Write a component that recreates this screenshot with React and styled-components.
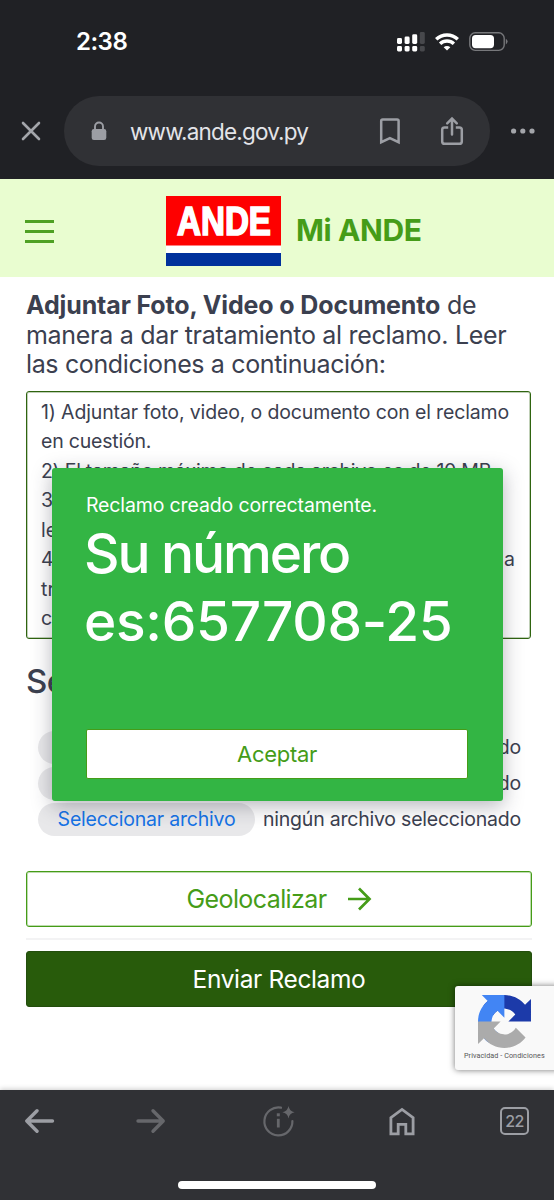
import React from 'react';
import styled, { createGlobalStyle } from 'styled-components';

const GlobalStyle = createGlobalStyle`
  * {
    box-sizing: border-box;
  }

  body {
    margin: 0;
    background: #ffffff;
    font-family: Inter, 'Liberation Sans', sans-serif;
  }

  svg {
    display: block;
    flex: none;
  }
`;

const Phone = styled.div`
  position: relative;
  width: 554px;
  height: 1200px;
  overflow: hidden;
  display: flex;
  flex-direction: column;
  background: #ffffff;
`;

const Text = styled.span`
  font-size: ${({ $size }) => $size}px;
  font-weight: ${({ $weight }) => $weight || 400};
  letter-spacing: ${({ $spacing }) => $spacing || 0}px;
  color: ${({ $color }) => $color || 'inherit'};
  white-space: nowrap;
`;

const Browser = styled.header`
  height: 179px;
  flex: none;
  background: #202125;
`;

const StatusBar = styled.div`
  height: 96px;
  padding: 27px 46px 0 76px;
  display: flex;
  align-items: flex-start;
  justify-content: space-between;
  line-height: 29px;
`;

const StatusIcons = styled.div`
  display: flex;
  align-items: center;
  gap: 10px;
  padding-top: 5px;
`;

const AddressRow = styled.div`
  display: flex;
  align-items: center;
  padding: 0 18px 0 20px;
  height: 70px;
`;

const AddressBar = styled.div`
  width: 427px;
  height: 70px;
  margin: 0 20px 0 22px;
  padding: 0 26px 0 27px;
  border-radius: 35px;
  background: #303135;
  display: flex;
  align-items: center;
`;

const Url = styled(Text)`
  flex: 1;
  margin-left: 23px;
`;

const BarIcons = styled.div`
  display: flex;
  align-items: center;
  gap: 39px;
`;

const SiteHeader = styled.div`
  height: 98px;
  flex: none;
  padding: 17px 25px 0;
  display: flex;
  align-items: flex-start;
  background: #e9fdd0;
`;

const MenuButton = styled.div`
  width: 29px;
  margin: 24px 112px 0 0;
  display: flex;
  flex-direction: column;
  gap: 7px;

  i {
    height: 3px;
    background: #4fa124;
  }
`;

const SiteName = styled(Text)`
  margin: 15px 0 0 15px;
  line-height: 38px;
`;

const Content = styled.main`
  flex: 1;
  padding: 14px 23px 0 26px;
  color: #3b404f;
`;

const Intro = styled.p`
  margin: 0;
  display: flex;
  flex-direction: column;
  line-height: 29.5px;
`;

const Conditions = styled.div`
  width: 505px;
  height: 248px;
  margin-top: 11.5px;
  padding: 5.5px 14px 0;
  display: flex;
  flex-direction: column;
  border: 1px solid #2f6410;
  box-shadow: inset 0 0 0 1px rgba(47, 100, 16, 0.3);
  border-radius: 3px;
  line-height: 29.5px;
`;

const Justified = styled(Text)`
  width: 474px;
  text-align-last: justify;
`;

const SectionTitle = styled.h2`
  margin: 22px 0 26px;
  line-height: 41px;
  font-weight: 500;
`;

const Files = styled.div`
  padding-left: 12px;
  display: flex;
  flex-direction: column;
  gap: 3px;
`;

const FileRow = styled.div`
  display: flex;
  align-items: center;
  gap: 8px;
  line-height: 30px;
`;

const FileButton = styled.div`
  width: 217px;
  height: 33px;
  padding-bottom: 2px;
  border-radius: 17px;
  background: #e8e8ea;
  display: flex;
  align-items: center;
  justify-content: center;
`;

const FileName = styled(Text)`
  padding-bottom: 2px;
`;

const ActionButton = styled.div`
  width: 506px;
  height: 56px;
  display: flex;
  align-items: center;
  justify-content: center;
  gap: 20px;
  border-radius: 3px;
  border: 1px solid ${({ $filled }) => ($filled ? '#234e0c' : '#459c18')};
  box-shadow: inset 0 0 0 1px ${({ $filled }) => ($filled ? '#28590d' : 'rgba(69, 156, 24, 0.35)')};
  background: ${({ $filled }) => ($filled ? '#285b0b' : '#ffffff')};
`;

const Divider = styled.div`
  width: 506px;
  height: 2px;
  margin: 11px 0;
  background: #f3f3f4;
`;

const Modal = styled.div`
  position: absolute;
  left: 52px;
  top: 468px;
  width: 451px;
  height: 333px;
  padding: 22px 34px 22px;
  display: flex;
  flex-direction: column;
  border-radius: 3px;
  background: #33b544;
  color: #ffffff;
  box-shadow: 0 5px 20px rgba(40, 40, 60, 0.34);
`;

const ModalMessage = styled(Text)`
  line-height: 30px;
`;

const ModalNumber = styled.div`
  flex: 1;
  margin-left: -2px;
  display: flex;
  flex-direction: column;
  line-height: 67.5px;
`;

const AcceptButton = styled.div`
  width: 382px;
  height: 50px;
  display: flex;
  align-items: center;
  justify-content: center;
  border: 1px solid #459c18;
  border-radius: 2px;
  background: #ffffff;
`;

const Captcha = styled.div`
  position: absolute;
  left: 455px;
  top: 986px;
  width: 105px;
  height: 84px;
  padding: 9px 0 0 9px;
  border-radius: 3px;
  background: #f9f9f9;
  box-shadow: 0 0 6px rgba(0, 0, 0, 0.55);
  font-family: Roboto, sans-serif;

  svg {
    margin-left: 14px;
  }
`;

const CaptchaLinks = styled(Text)`
  display: block;
  line-height: 14px;
  margin-top: 1px;
`;

const Toolbar = styled.footer`
  position: relative;
  height: 110px;
  flex: none;
  display: flex;
  flex-direction: column;
  align-items: center;
  justify-content: space-between;
  padding-bottom: 11px;
  background: #303135;
  box-shadow: 0 -1px 5px rgba(0, 0, 0, 0.2);
`;

const ToolbarIcons = styled.div`
  width: 554px;
  height: 62px;
  padding: 0 25px;
  display: grid;
  grid-template-columns: 111px 126px 127px 111px 29px;
  align-items: center;
`;

const TabCount = styled.div`
  width: 29px;
  height: 28px;
  display: flex;
  align-items: center;
  justify-content: center;
  border: 2px solid #9c9ea4;
  border-radius: 5px;
  color: #9c9ea4;
`;

const HomeIndicator = styled.div`
  width: 198px;
  height: 8px;
  border-radius: 4px;
  background: #ffffff;
`;

const Signal = () => (
  <svg width="28" height="20" viewBox="0 0 28 20" fill="#fff">
    <rect x="0" y="6" width="5" height="6" rx="1.4" />
    <rect x="7.6" y="4.5" width="5" height="7.5" rx="1.4" />
    <rect x="15.2" y="2.3" width="5" height="9.7" rx="1.4" />
    <rect x="22.8" y="0" width="5" height="12" rx="1.4" fill="#47484c" />
    <rect x="0" y="14" width="5" height="5.4" rx="1.4" />
    <rect x="7.6" y="14" width="5" height="5.4" rx="1.4" />
    <rect x="15.2" y="14" width="5" height="5.4" rx="1.4" />
    <rect x="22.8" y="14" width="5" height="5.4" rx="1.4" fill="#47484c" />
  </svg>
);

const Wifi = () => (
  <svg width="24" height="18" viewBox="0 0 24 18" fill="none" stroke="#fff" strokeWidth="3.4">
    <path d="M1.2 6.3a15.6 15.6 0 0 1 21.6 0" />
    <path d="M5.1 10.7a10 10 0 0 1 13.8 0" />
    <path d="M12 17.6l-3.3-3.3a4.7 4.7 0 0 1 6.6 0z" fill="#fff" stroke="none" />
  </svg>
);

const Battery = () => (
  <svg width="39" height="20" viewBox="0 0 39 20">
    <rect x="0.8" y="0.8" width="34.4" height="17.6" rx="5.4" fill="none" stroke="#77787b" strokeWidth="1.4" />
    <rect x="3" y="3" width="22" height="13.2" rx="3.6" fill="#fff" />
    <path d="M36.8 6.8q1.8 1 1.8 2.8t-1.8 2.8z" fill="#77787b" />
  </svg>
);

const Close = () => (
  <svg width="22" height="22" viewBox="0 0 22 22" stroke="#a3a5aa" strokeWidth="2.6" strokeLinecap="round">
    <path d="M3 3l16 16M19 3L3 19" />
  </svg>
);

const Lock = () => (
  <svg width="16" height="20" viewBox="0 0 16 20">
    <path d="M4 9V5.5a4 4 0 0 1 8 0V9" fill="none" stroke="#9c9ea4" strokeWidth="1.9" />
    <rect x="0.7" y="8" width="14.6" height="11" rx="2.2" fill="#9c9ea4" />
  </svg>
);

const Bookmark = () => (
  <svg width="22" height="28" viewBox="0 0 22 28" fill="none" stroke="#9c9ea4" strokeWidth="2.5">
    <path d="M2.2 25.2V4.1Q2.2 2.6 3.7 2.6H18.1Q19.6 2.6 19.6 4.1V25.2L10.9 21.1z" />
  </svg>
);

const Share = () => (
  <svg width="24" height="30" viewBox="0 0 24 30" fill="none" stroke="#9c9ea4" strokeWidth="2.5">
    <path d="M8.2 11.4H4.6Q2.2 11.4 2.2 13.8V25.4Q2.2 27.8 4.6 27.8H19.4Q21.8 27.8 21.8 25.4V13.8Q21.8 11.4 19.4 11.4H15.8" />
    <path d="M12 18.5V2.9M7.2 7.4l4.8-4.8 4.8 4.8" strokeLinecap="round" />
  </svg>
);

const More = () => (
  <svg width="26" height="6" viewBox="0 0 26 6" fill="#a3a5aa">
    <circle cx="3.6" cy="3" r="2.6" />
    <circle cx="12.8" cy="3" r="2.6" />
    <circle cx="22" cy="3" r="2.6" />
  </svg>
);

const Logo = () => (
  <svg width="115" height="70" viewBox="0 0 115 70">
    <rect width="115" height="70" fill="#fff" />
    <rect width="115" height="49.5" fill="#fe0000" />
    <rect y="57" width="115" height="13" fill="#00319c" />
    <text
      x="11"
      y="39"
      textLength="94"
      lengthAdjust="spacingAndGlyphs"
      fill="#fff"
      stroke="#fff"
      strokeWidth="1.7"
      fontFamily="Liberation Sans"
      fontWeight="700"
      fontSize="40.5"
    >
      ANDE
    </text>
  </svg>
);

const GoArrow = () => (
  <svg width="25" height="24" viewBox="0 0 25 24" fill="none" stroke="#459c18" strokeWidth="2.7">
    <path d="M1 12H22.5M12 1.5L22.5 12L12 22.5" />
  </svg>
);

const NavArrow = ({ color, forward }) => (
  <svg width="30" height="26" viewBox="0 0 30 26" fill="none" stroke={color} strokeWidth="3.4" strokeLinecap="round" strokeLinejoin="round">
    <path d={forward ? 'M2 13H27M17 2.8L27.2 13L17 23.2' : 'M27.5 13H2M12 2.8L1.8 13L12 23.2'} />
  </svg>
);

const InfoSpark = () => (
  <svg width="34" height="32" viewBox="0 0 34 32" fill="none" stroke="#66676b" strokeWidth="2.2">
    <path d="M19 2.7A14 14 0 1 0 30.4 16" strokeLinecap="round" />
    <path d="M16.3 13.8V22.5" strokeWidth="2.8" />
    <rect x="14.8" y="8.3" width="3" height="3" fill="#66676b" stroke="none" />
    <path d="M26.5 1Q27.4 6.2 32.6 7.2Q27.4 8.2 26.5 13.4Q25.6 8.2 20.4 7.2Q25.6 6.2 26.5 1z" fill="#66676b" stroke="none" />
  </svg>
);

const Home = () => (
  <svg width="26" height="29" viewBox="0 0 26 29" fill="none" stroke="#9c9ea4" strokeWidth="2.8">
    <path d="M1.9 26.8V10.6L13 2.4L24.1 10.6V26.8H16.8V17.3H9.2V26.8z" />
  </svg>
);

const Recaptcha = () => (
  <svg width="53" height="53" viewBox="0 0 64 64">
    <path fill="#1c3aa9" d="M64 31.955l-.033-1.37V4.687l-7.16 7.16C50.948 4.674 42.033.093 32.05.093c-10.4 0-19.622 4.96-25.458 12.64l11.736 11.86a15.55 15.55 0 0 1 4.754-5.334c2.05-1.6 4.952-2.906 8.968-2.906.485 0 .86.057 1.135.163 4.976.393 9.288 3.14 11.828 7.124l-8.307 8.307L64 31.953" />
    <path fill="#4285f4" d="M31.862.094l-1.37.033H4.594l7.16 7.16C4.58 13.147 0 22.06 0 32.046c0 10.4 4.96 19.622 12.64 25.458L24.5 45.768a15.55 15.55 0 0 1-5.334-4.754c-1.6-2.05-2.906-4.952-2.906-8.968 0-.485.057-.86.163-1.135.393-4.976 3.14-9.288 7.124-11.828l8.307 8.307L31.86.095" />
    <path fill="#ababab" d="M.001 32.045l.033 1.37v25.898l7.16-7.16c5.86 7.173 14.774 11.754 24.76 11.754 10.4 0 19.622-4.96 25.458-12.64l-11.736-11.86a15.55 15.55 0 0 1-4.754 5.334c-2.05 1.6-4.952 2.906-8.968 2.906-.485 0-.86-.057-1.135-.163-4.976-.393-9.288-3.14-11.828-7.124l8.307-8.307c-10.522.04-22.4.066-27.295-.005" />
  </svg>
);

const files = [1, 2, 3];

const App = () => {
  return (
    <>
      <GlobalStyle />
      <Phone>
        <Browser>
          <StatusBar>
            <Text $size={24} $weight={600} $spacing={-0.5} $color="#fff">2:38</Text>
            <StatusIcons>
              <Signal />
              <Wifi />
              <Battery />
            </StatusIcons>
          </StatusBar>
          <AddressRow>
            <Close />
            <AddressBar>
              <Lock />
              <Url $size={22.5} $spacing={-0.82} $color="#e3e4e8">www.ande.gov.py</Url>
              <BarIcons>
                <Bookmark />
                <Share />
              </BarIcons>
            </AddressBar>
            <More />
          </AddressRow>
        </Browser>

        <SiteHeader>
          <MenuButton>
            <i />
            <i />
            <i />
          </MenuButton>
          <Logo />
          <SiteName $size={30} $weight={700} $spacing={-0.38} $color="#459c18">Mi ANDE</SiteName>
        </SiteHeader>

        <Content>
          <Intro>
            <Text $size={25} $spacing={-0.3}>
              <Text as="b" $size={25} $weight={700} $spacing={-0.13}>Adjuntar Foto, Video o Documento</Text> de
            </Text>
            <Text $size={25} $spacing={-0.3}>manera a dar tratamiento al reclamo. Leer</Text>
            <Text $size={25} $spacing={-0.36}>las condiciones a continuación:</Text>
          </Intro>

          <Conditions>
            <Text $size={19.5} $spacing={-0.14}>1) Adjuntar foto, video, o documento con el reclamo</Text>
            <Text $size={19.5} $spacing={-0.2}>en cuestión.</Text>
            <Text $size={19.5} $spacing={-0.27}>2) El tamaño máximo de cada archivo es de 10 MB.</Text>
            <Text $size={19.5}>3) Los archivos adjuntos deben ser</Text>
            <Text $size={19.5}>legibles.</Text>
            <Justified $size={19.5}>4) Los datos se utilizan para la</Justified>
            <Text $size={19.5}>tramitación del reclamo</Text>
            <Text $size={19.5}>correspondiente.</Text>
          </Conditions>

          <SectionTitle>
            <Text $size={33} $weight={500} $spacing={-0.6}>Seleccionar archivos</Text>
          </SectionTitle>

          <Files>
            {files.map((id) => (
              <FileRow key={id}>
                <FileButton>
                  <Text $size={19.5} $spacing={-0.2} $color="#1673e6">Seleccionar archivo</Text>
                </FileButton>
                <FileName $size={19.5} $spacing={-0.22}>ningún archivo seleccionado</FileName>
              </FileRow>
            ))}
          </Files>

          <ActionButton style={{ marginTop: 35 }}>
            <Text $size={25} $spacing={-0.6} $color="#459c18">Geolocalizar</Text>
            <GoArrow />
          </ActionButton>
          <Divider />
          <ActionButton $filled>
            <Text $size={24.5} $spacing={-0.36} $color="#fff">Enviar Reclamo</Text>
          </ActionButton>
        </Content>

        <Toolbar>
          <ToolbarIcons>
            <NavArrow color="#9c9ea4" />
            <NavArrow color="#66676b" forward />
            <InfoSpark />
            <Home />
            <TabCount>
              <Text $size={16} $weight={500} $spacing={-0.5}>22</Text>
            </TabCount>
          </ToolbarIcons>
          <HomeIndicator />
        </Toolbar>

        <Modal>
          <ModalMessage $size={19.5} $spacing={-0.14}>Reclamo creado correctamente.</ModalMessage>
          <ModalNumber>
            <Text $size={55} $weight={500} $spacing={-2.1}>Su número</Text>
            <Text $size={55} $weight={500} $spacing={-0.3}>es:657708-25</Text>
          </ModalNumber>
          <AcceptButton>
            <Text $size={22} $spacing={-0.3} $color="#459c18">Aceptar</Text>
          </AcceptButton>
        </Modal>

        <Captcha>
          <Recaptcha />
          <CaptchaLinks $size={7.2} $spacing={0.08} $color="#555">Privacidad - Condiciones</CaptchaLinks>
        </Captcha>
      </Phone>
    </>
  );
};

export default App;
